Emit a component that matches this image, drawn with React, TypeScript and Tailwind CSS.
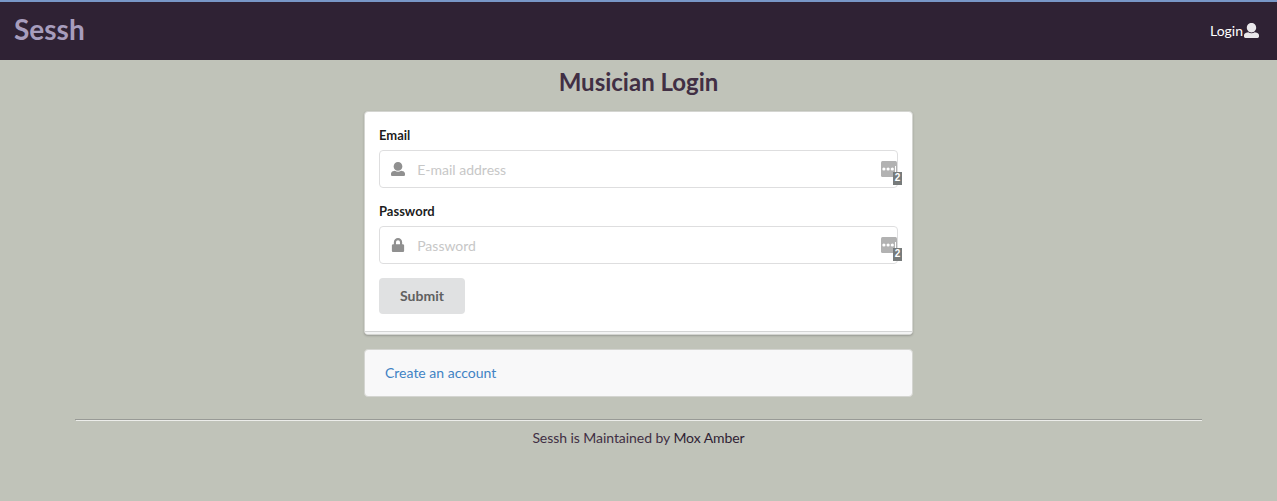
import { FaLock } from "react-icons/fa";
import type { ReactNode } from "react";

function UserIcon({ className }: { className: string }) {
  return (
    <svg viewBox="0 0 512 512" fill="currentColor" className={className}>
      <path d="M256 0c88.366 0 160 71.634 160 160s-71.634 160-160 160S96 248.366 96 160 167.634 0 256 0zm183.283 333.821l-71.313-17.828c-74.923 53.89-165.738 41.864-223.94 0l-71.313 17.828C29.981 344.505 0 382.903 0 426.955V464c0 26.51 21.49 48 48 48h416c26.51 0 48-21.49 48-48v-37.045c0-44.052-29.981-82.45-72.717-93.134z" />
    </svg>
  );
}

function VaultBadge() {
  return (
    <span className="absolute top-[10px] right-0 h-4 w-4">
      <svg viewBox="0 0 16 16" className="h-4 w-4">
        <rect width="16" height="16" rx="1.5" fill="#b2b2b2" />
        <circle cx="2.9" cy="8" r="1.6" fill="#fff" />
        <circle cx="7.1" cy="8" r="1.6" fill="#fff" />
        <circle cx="11.3" cy="8" r="1.6" fill="#fff" />
        <rect x="14" y="5" width="1" height="6" fill="#fff" />
      </svg>
      <span className="absolute top-[11px] left-3 h-[13px] w-[9px] bg-[#777b7b] text-center font-['Liberation_Sans'] text-[10px] leading-[12px] font-bold text-white">
        2
      </span>
    </span>
  );
}

function Field({ label, type, placeholder, icon }: { label: string; type: string; placeholder: string; icon: ReactNode }) {
  return (
    <label className="mb-[14px] block">
      <span className="block h-6 text-[13px] leading-[18px] font-bold text-black/90">{label}</span>
      <span className="relative flex h-[38px] items-center rounded border border-[#dededf] bg-white">
        <span className="flex w-9 justify-center pl-[0.8px] text-[#909090]">{icon}</span>
        <input
          type={type}
          placeholder={placeholder}
          className="h-full min-w-0 flex-1 bg-transparent pt-px pl-[1.2px] text-[14px] outline-none placeholder:text-[#c7c7c7]"
        />
        <VaultBadge />
      </span>
    </label>
  );
}

export default function App() {
  return (
    <div className="min-h-screen bg-[#c0c3b9] font-[Lato,sans-serif] text-[14px] leading-5 text-[#412f44]">
      <header className="flex h-[60px] items-center justify-between border-t-2 border-[#7897c7] bg-[#2f2234] pr-[18px] pl-[14px]">
        <span className="pb-[5px] text-[28px] leading-9 font-bold text-[#a79dbd]">Sessh</span>
        <a href="#" className="flex items-center text-white">
          Login
          <UserIcon className="mb-px ml-px h-[15px] w-[15px] text-[#eae8eb]" />
        </a>
      </header>
      <main className="mx-auto w-[549px]">
        <h2 className="flex h-[51px] items-center justify-center pb-[9px] text-[24px] leading-[31px] font-bold">
          Musician Login
        </h2>
        <form className="h-[224px] overflow-hidden rounded border border-[#d4d5d1] bg-white shadow-[0_1px_2px_rgba(34,36,38,0.25)]">
          <div className="h-[220px] border-b border-[#d4d5d5] p-[14px]">
            <Field label="Email" type="email" placeholder="E-mail address" icon={<UserIcon className="h-[14px] w-[14px]" />} />
            <Field label="Password" type="password" placeholder="Password" icon={<FaLock className="h-[14px] w-[14px]" />} />
            <button type="button" className="h-9 w-[86px] rounded bg-[#e0e1e2] text-[14px] font-bold text-[#5f6060]">
              Submit
            </button>
          </div>
          <div className="h-[3px] bg-[#f3f4f4]" />
        </form>
        <div className="mt-[14px] flex h-12 items-center rounded border border-[#d4d5d1] bg-[#f8f8f9] px-5">
          <a href="#" className="text-[#4183c4]">Create an account</a>
        </div>
      </main>
      <footer className="mx-[75px] mt-[22px] text-center">
        <div className="h-px bg-[#989a96]" />
        <div className="ml-px h-px bg-[#ecedea]" />
        <p className="pt-[7px] tracking-[-0.06px]">
          Sessh is Maintained by <a href="#" className="text-[#2f2234]">Mox Amber</a>
        </p>
      </footer>
    </div>
  );
}
